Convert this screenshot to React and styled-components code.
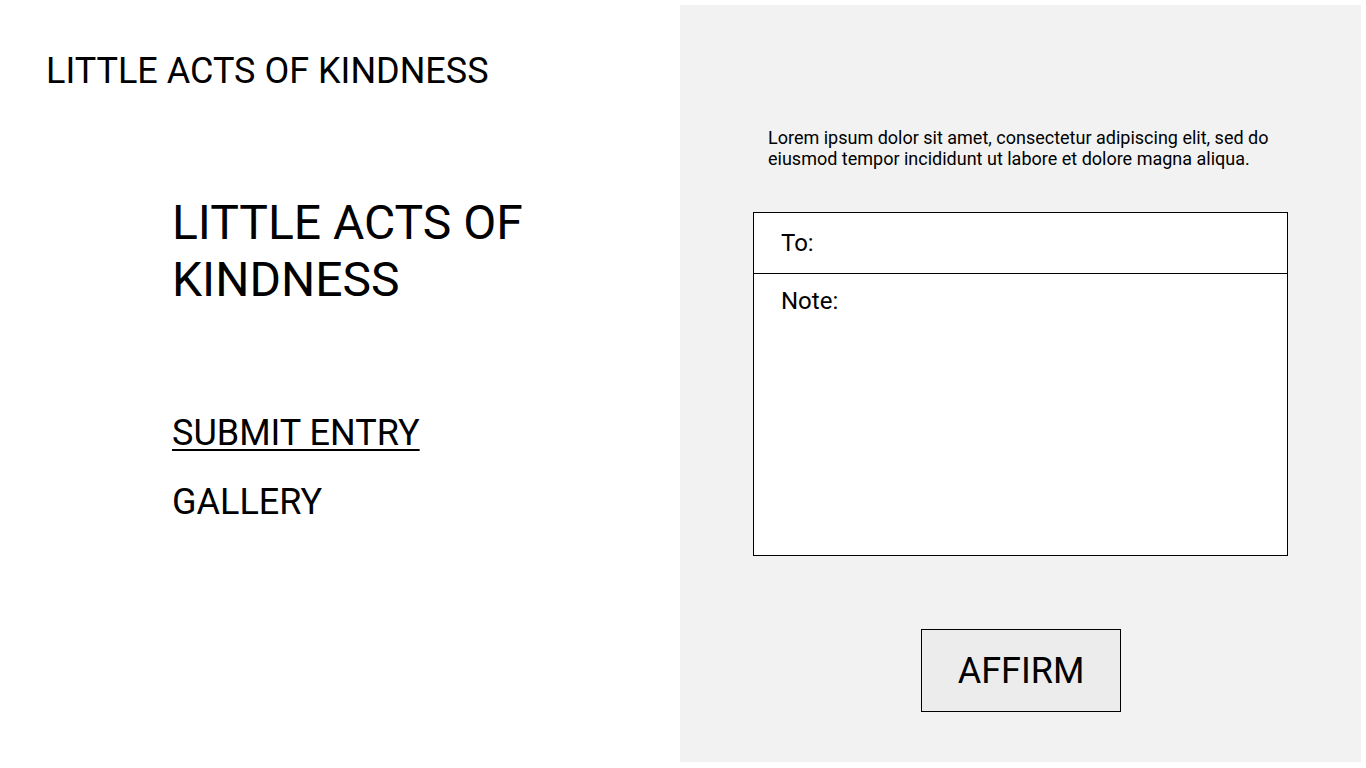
import React from 'react';
import styled, { createGlobalStyle } from "styled-components";

const GlobalStyle = createGlobalStyle`
    html, body {
        margin: 0;
        padding: 0;
        background: #ffffff;
        font-family: Roboto, "Liberation Sans", sans-serif;
        color: #000000;
    }
`;

const Page = styled.div`
    width: 1366px;
    height: 768px;
    display: grid;
    grid-template-columns: 680px 681px;
    box-sizing: border-box;
    padding: 5px 0 6px 0;
`;

const Left = styled.div`
    display: flex;
    flex-direction: column;
`;

const Brand = styled.div`
    font-size: 36px;
    line-height: 40px;
    margin: 46px 0 0 46px;
    white-space: nowrap;
`;

const Hero = styled.h1`
    font-size: 48px;
    font-weight: 400;
    line-height: 57px;
    margin: 103px 0 0 172px;
    width: 380px;
`;

const Nav = styled.nav`
    display: flex;
    flex-direction: column;
    gap: 31px;
    margin: 106px 0 0 172px;
`;

const NavLink = styled.a`
    font-size: 36px;
    line-height: 38px;
    color: #000000;
    text-decoration: ${p => (p.$active ? "underline" : "none")};
    text-decoration-thickness: 2px;
    text-underline-offset: 4px;
    align-self: flex-start;
`;

const Panel = styled.div`
    background: #f2f2f2;
    display: flex;
    flex-direction: column;
    padding: 122px 0 0 73px;
`;

const Intro = styled.p`
    margin: 0 0 0 15px;
    font-size: 18px;
    line-height: 21px;
    width: 540px;
`;

const Form = styled.div`
    margin-top: 43px;
    width: 535px;
    height: 344px;
    box-sizing: border-box;
    border: 1px solid #000000;
    background: #ffffff;
    display: flex;
    flex-direction: column;
`;

const Field = styled.div`
    font-size: 24px;
    line-height: 28px;
    padding: ${p => (p.$grow ? "13px 27px" : "16px 27px")};
    box-sizing: border-box;
    height: ${p => (p.$grow ? "auto" : "60px")};
    flex: ${p => (p.$grow ? 1 : "none")};
    border-top: ${p => (p.$grow ? "1px solid #000000" : "none")};
`;

const Affirm = styled.button`
    align-self: flex-start;
    margin: 73px 0 0 168px;
    width: 200px;
    height: 83px;
    box-sizing: border-box;
    border: 1px solid #000000;
    background: #ececec;
    font-family: Roboto, "Liberation Sans", sans-serif;
    font-size: 36px;
    color: #000000;
    padding: 0;
`;

const App = () => {
    return (
        <Page>
            <GlobalStyle/>
            <Left>
                <Brand>LITTLE ACTS OF KINDNESS</Brand>
                <Hero>LITTLE ACTS OF KINDNESS</Hero>
                <Nav>
                    <NavLink $active>SUBMIT ENTRY</NavLink>
                    <NavLink>GALLERY</NavLink>
                </Nav>
            </Left>
            <Panel>
                <Intro>
                    Lorem ipsum dolor sit amet, consectetur adipiscing elit, sed do eiusmod tempor incididunt ut labore et dolore magna aliqua.
                </Intro>
                <Form>
                    <Field>To:</Field>
                    <Field $grow>Note:</Field>
                </Form>
                <Affirm>AFFIRM</Affirm>
            </Panel>
        </Page>
    )
}

export default App
